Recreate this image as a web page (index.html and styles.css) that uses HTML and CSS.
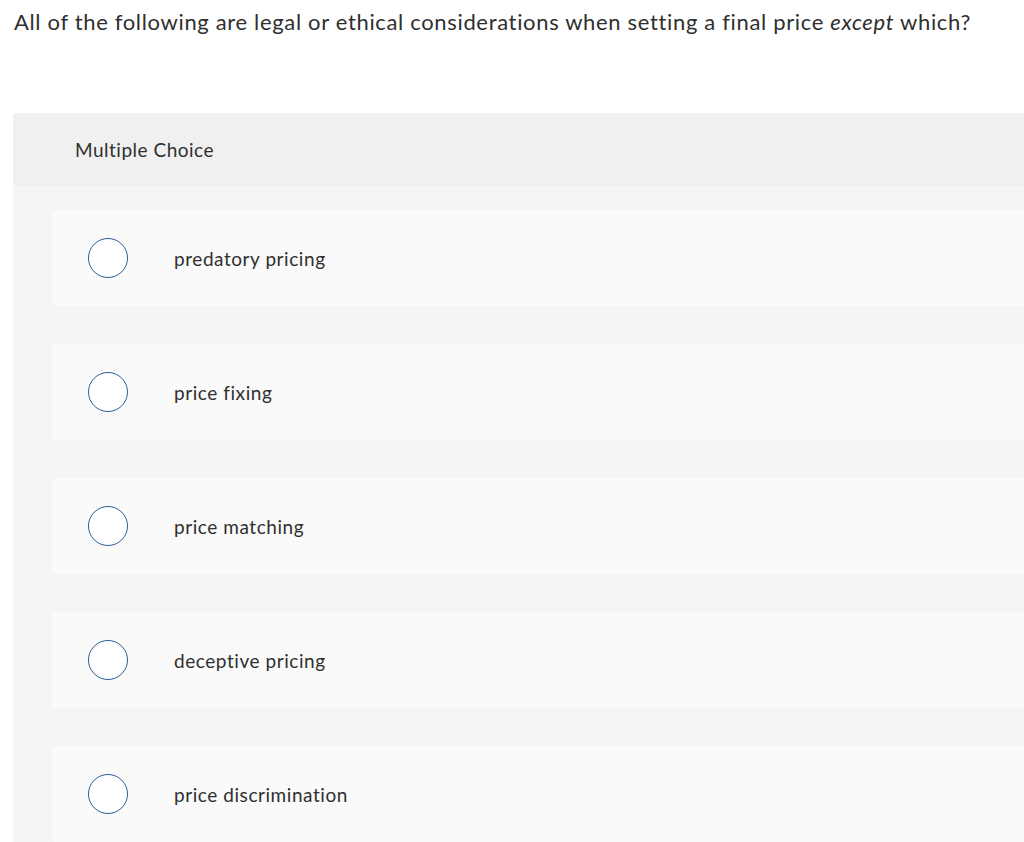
FILE: index.html
```html
<!DOCTYPE html>
<html>
<head>
<meta charset="utf-8">
<link rel="stylesheet" href="styles.css">
</head>
<body>
<div class="question">All of the following are legal or ethical considerations when setting a final price <em>except</em> which?</div>
<div class="panel">
  <div class="panel-head">Multiple Choice</div>
  <div class="panel-body">
    <div class="option"><span class="radio"></span><span class="label">predatory pricing</span></div>
    <div class="option"><span class="radio"></span><span class="label">price fixing</span></div>
    <div class="option"><span class="radio"></span><span class="label">price matching</span></div>
    <div class="option"><span class="radio"></span><span class="label">deceptive pricing</span></div>
    <div class="option"><span class="radio"></span><span class="label">price discrimination</span></div>
  </div>
</div>
</body>
</html>
```

FILE: styles.css
```css
html, body {
  margin: 0;
  padding: 0;
  background: #ffffff;
  height: 842px;
  overflow: hidden;
}
body {
  font-family: "Lato", "Open Sans", sans-serif;
  color: #2f2f2f;
  font-variant-ligatures: none;
  font-feature-settings: "liga" 0;
}
.question {
  padding: 8px 0 0 14px;
  font-size: 22px;
  letter-spacing: 0.66px;
  line-height: 28px;
  height: 113px;
  box-sizing: border-box;
}
.question em {
  font-style: italic;
}
.panel {
  margin-left: 13px;
  width: 1030px;
  border-radius: 4px 0 0 0;
  overflow: hidden;
}
.panel-head {
  background: #f0f0f0;
  height: 73px;
  display: flex;
  align-items: center;
  padding-left: 62px;
  font-size: 19px;
  letter-spacing: 0.5px;
}
.panel-body {
  background: #f5f5f5;
  padding: 24px 0 0 39px;
  display: flex;
  flex-direction: column;
  gap: 38px;
  height: 656px;
  box-sizing: border-box;
  overflow: hidden;
}
.option {
  background: #fafafa;
  height: 96px;
  flex: none;
  border-radius: 4px 0 0 4px;
  display: flex;
  align-items: center;
  padding-left: 36px;
}
.radio {
  width: 40px;
  height: 40px;
  box-sizing: border-box;
  border: 1.5px solid #2b5d92;
  border-radius: 50%;
  background: #ffffff;
  flex: none;
}
.label {
  margin-left: 46px;
  font-size: 19px;
  letter-spacing: 0.56px;
}
```
